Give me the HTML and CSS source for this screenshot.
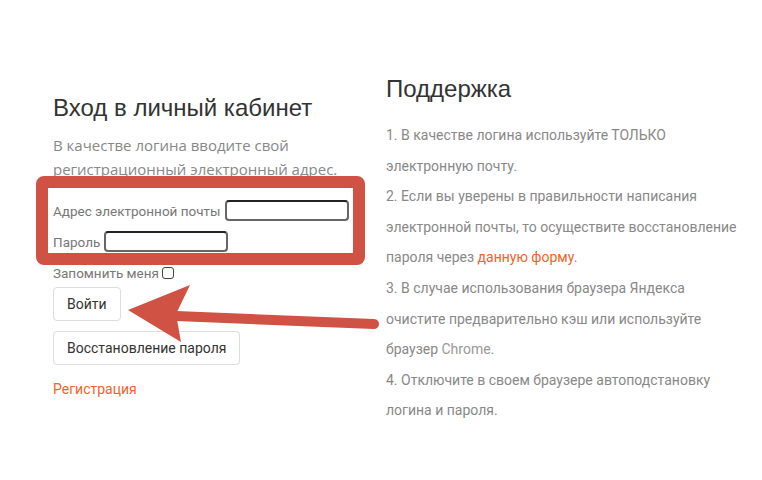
FILE: index.html
```html
<!DOCTYPE html>
<html lang="ru">
<head>
  <meta charset="UTF-8" />
  <title>Вход в личный кабинет</title>
  <link rel="stylesheet" href="styles.css">
</head>
<body>
  <div class="page">
    <div class="login">
      <h2 class="title">Вход в личный кабинет</h2>
      <div class="hint">В качестве логина вводите свой регистрационный электронный адрес.</div>

      <div class="fields">
        <div class="mark"></div>
        <div class="row"><span>Адрес электронной почты</span><input class="input-box" type="text"></div>
        <div class="row"><span>Пароль</span><input class="input-box" type="password"></div>
        <div class="row"><span>Запомнить меня</span><span class="check"></span></div>
      </div>

      <button class="button">Войти</button>
      <button class="button">Восстановление пароля</button>
      <a class="link reg" href="#">Регистрация</a>
    </div>

    <div class="support">
      <h2 class="title">Поддержка</h2>
      <p>1. В качестве логина используйте ТОЛЬКО электронную почту.</p>
      <p>2. Если вы уверены в правильности написания электронной почты, то осуществите восстановление пароля через <a class="link" href="#">данную форму</a>.</p>
      <p>3. В случае использования браузера Яндекса очистите предварительно кэш или используйте браузер <span class="light">Chrome</span>.</p>
      <p>4. Отключите в своем браузере автоподстановку логина и пароля.</p>
    </div>

    <svg class="arrow" width="762" height="480" viewBox="0 0 762 480">
      <line x1="176" y1="316" x2="374" y2="324" stroke="#d05245" stroke-width="10" stroke-linecap="round"/>
      <polygon points="128,310 190,285 176,314 181,342" fill="#d05245"/>
    </svg>
  </div>
</body>
</html>
```

FILE: styles.css
```css
* {
  box-sizing: border-box;
}

body {
  margin: 0;
  background: #fff;
  font-family: Roboto, 'Liberation Sans', Arial, sans-serif;
}

.page {
  position: relative;
  display: flex;
  width: 762px;
  height: 480px;
  padding: 74px 0 0 53px;
}

.login {
  width: 333px;
  padding-top: 19px;
}

.title {
  margin: 0;
  font-family: 'Liberation Sans', Arial, sans-serif;
  font-size: 24px;
  font-weight: 400;
  line-height: 30px;
  color: #333;
}

.hint {
  margin-top: 10px;
  width: 320px;
  font-family: 'Open Sans', sans-serif;
  font-size: 15px;
  line-height: 24px;
  color: #888;
}

.fields {
  position: relative;
  margin-top: 19px;
}

.mark {
  position: absolute;
  left: -17px;
  top: -24px;
  width: 329px;
  height: 89px;
  border: 12px solid #d05245;
  border-radius: 8px;
}

.row {
  display: flex;
  align-items: center;
  gap: 4px;
  height: 21px;
  margin-bottom: 10px;
  font-size: 13.5px;
  color: #777;
}

.input-box {
  width: 124px;
  height: 21px;
  margin: 0;
  padding: 0 4px;
  border: 2px solid #666;
  border-top-color: #222;
  border-radius: 4px;
  outline: none;
  background: #fff;
}

.check {
  width: 12px;
  height: 12px;
  margin-left: -1px;
  border: 1px solid #444;
  border-radius: 3px;
}

.button {
  display: block;
  height: 34px;
  margin: -6px 0 10px;
  padding: 0 13px;
  border: 1px solid #ddd;
  border-radius: 4px;
  background: #fff;
  font-family: Roboto, 'Liberation Sans', Arial, sans-serif;
  font-size: 14px;
  color: #333;
}

.button + .button {
  margin: 0 0 14px;
}

.link {
  color: #f4622a;
  text-decoration: none;
}

.reg {
  display: block;
  font-size: 14px;
  line-height: 20px;
}

.support {
  width: 356px;
}

.support .title {
  margin-bottom: 16px;
}

.support p {
  margin: 0;
  font-size: 14px;
  line-height: 30.6px;
  color: #888;
}

.light {
  color: #999;
}

.arrow {
  position: absolute;
  left: 0;
  top: 0;
  pointer-events: none;
}
```
